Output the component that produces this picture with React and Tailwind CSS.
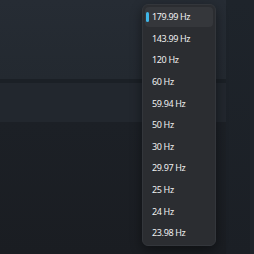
import React from "react";

const rates = [
  "179.99 Hz",
  "143.99 Hz",
  "120 Hz",
  "60 Hz",
  "59.94 Hz",
  "50 Hz",
  "30 Hz",
  "29.97 Hz",
  "25 Hz",
  "24 Hz",
  "23.98 Hz",
];

export default function App() {
  return (
    <div className="relative w-[254px] h-[254px] overflow-hidden bg-gradient-to-b from-[#20252c] to-[#1a1d22] font-['Noto_Sans',sans-serif]">
      <div className="flex h-full">
        <div className="flex flex-col w-[226px]">
          <div className="h-[79px] bg-gradient-to-b from-[#262c34] to-[#232930]" />
          <div className="h-[4px] bg-[#1b2026]" />
          <div className="h-[39px] bg-[#22272e]" />
          <div className="flex-1 bg-gradient-to-b from-[#1c2026] to-[#1a1d22]" />
        </div>
        <div className="w-[24px] bg-gradient-to-b from-[#1e242b] to-[#1b1f25]" />
        <div className="flex-1 bg-[#1f242a]" />
      </div>

      <div className="absolute left-[142px] top-[4px] w-[74px] h-[242px] rounded-[6px] border border-[#33363b] bg-[#2b2d31] shadow-[0_4px_12px_rgba(0,0,0,0.45)] px-[2px] pt-[2px] flex flex-col gap-[1.6px]">
        {rates.map((r, i) => (
          <div
            key={r}
            className={`relative h-[20px] flex items-center pl-[7px] rounded-[4px] text-[9px] tracking-[-0.35px] text-[#f0f0f0] ${
              i === 0 ? "bg-[#35373b]" : ""
            }`}
          >
            {i === 0 && (
              <span className="absolute left-[1px] top-[5px] w-[2.5px] h-[10px] rounded-full bg-[#3fb6e8]" />
            )}
            {r}
          </div>
        ))}
      </div>
    </div>
  );
}
